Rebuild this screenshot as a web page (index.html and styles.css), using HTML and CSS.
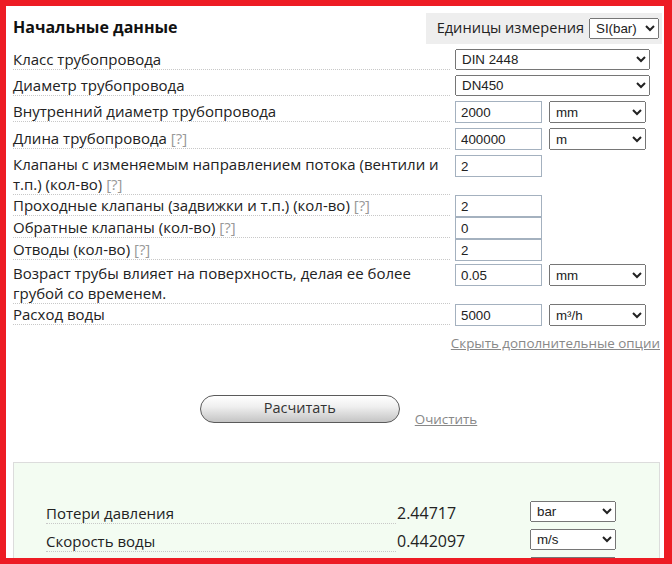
FILE: index.html
```html
<!DOCTYPE html>
<html lang="ru">
<head>
<meta charset="utf-8">
<title>Потери давления в трубопроводе</title>
<link rel="stylesheet" href="styles.css">
</head>
<body>
<div class="frame">
  <div class="calc">
    <div class="head">
      <h2 class="title">Начальные данные</h2>
      <div class="units">
        <span>Единицы измерения</span>
        <select class="sel sel--units"><option>SI(bar)</option></select>
      </div>
    </div>

    <div class="row">
      <div class="label">Класс трубопровода</div>
      <div class="ctrl"><select class="sel sel--wide"><option>DIN 2448</option></select></div>
    </div>
    <div class="row">
      <div class="label">Диаметр трубопровода</div>
      <div class="ctrl"><select class="sel sel--wide"><option>DN450</option></select></div>
    </div>
    <div class="row">
      <div class="label">Внутренний диаметр трубопровода</div>
      <div class="ctrl"><input class="inp" value="2000"><select class="sel sel--unit"><option>mm</option></select></div>
    </div>
    <div class="row">
      <div class="label">Длина трубопровода <span class="hint">[?]</span></div>
      <div class="ctrl"><input class="inp" value="400000"><select class="sel sel--unit"><option>m</option></select></div>
    </div>
    <div class="row row--flush">
      <div class="label label--multi">Клапаны с изменяемым направлением потока (вентили и т.п.) (кол-во) <span class="hint">[?]</span></div>
      <div class="ctrl"><input class="inp" value="2"></div>
    </div>
    <div class="row row--flush">
      <div class="label">Проходные клапаны (задвижки и т.п.) (кол-во) <span class="hint">[?]</span></div>
      <div class="ctrl"><input class="inp" value="2"></div>
    </div>
    <div class="row row--flush">
      <div class="label">Обратные клапаны (кол-во) <span class="hint">[?]</span></div>
      <div class="ctrl"><input class="inp" value="0"></div>
    </div>
    <div class="row row--snug">
      <div class="label">Отводы (кол-во) <span class="hint">[?]</span></div>
      <div class="ctrl"><input class="inp" value="2"></div>
    </div>
    <div class="row row--flush">
      <div class="label label--multi">Возраст трубы влияет на поверхность, делая ее более грубой со временем.</div>
      <div class="ctrl"><input class="inp" value="0.05"><select class="sel sel--unit"><option>mm</option></select></div>
    </div>
    <div class="row">
      <div class="label">Расход воды</div>
      <div class="ctrl"><input class="inp" value="5000"><select class="sel sel--unit"><option>m³/h</option></select></div>
    </div>

    <div class="more"><a href="#">Скрыть дополнительные опции</a></div>

    <div class="actions">
      <button class="calc-btn" type="button">Расчитать</button>
      <a class="clear" href="#">Очистить</a>
    </div>

    <div class="results">
      <div class="res-row">
        <div class="res-label">Потери давления</div>
        <div class="res-value">2.44717</div>
        <select class="sel sel--res"><option>bar</option></select>
      </div>
      <div class="res-row">
        <div class="res-label">Скорость воды</div>
        <div class="res-value">0.442097</div>
        <select class="sel sel--res"><option>m/s</option></select>
      </div>
      <div class="res-row">
        <div class="res-label"></div>
        <div class="res-value"></div>
        <select class="sel sel--res"><option></option></select>
      </div>
    </div>
  </div>
</div>
</body>
</html>
```

FILE: styles.css
```css
* { box-sizing: border-box; }

html, body {
  margin: 0;
  padding: 0;
  background: #ffffff;
}

.frame {
  height: 564px;
  overflow: hidden;
  border: 6px solid #ed1c24;
  border-right-width: 8px;
  background: #ffffff;
}

.calc {
  padding: 6px 4px 0 7px;
  font-family: "Open Sans", "Liberation Sans", sans-serif;
  font-size: 15px;
  color: #222;
}

.head {
  display: flex;
  justify-content: space-between;
  align-items: flex-start;
  height: 32px;
  margin-bottom: 5px;
}

.title {
  margin: 0;
  padding-top: 4px;
  line-height: 22px;
  font-size: 16px;
  font-weight: 700;
  color: #111;
}

.units {
  display: flex;
  align-items: baseline;
  gap: 5px;
  height: 31px;
  margin-top: 1px;
  margin-right: -2px;
  padding: 4px 3px 6px 11px;
  background: #eeeeee;
  font-size: 14.6px;
  color: #222;
}

.sel {
  height: 21px;
  font-family: "Liberation Sans", Arial, sans-serif;
  font-size: 13.33px;
  color: #222;
  padding: 0 2px;
}

.sel--units { width: 70px; }
.sel--wide { width: 195px; }
.sel--unit { width: 97px; height: 22px; }
.sel--res { width: 86px; }

.inp {
  width: 87px;
  height: 22px;
  padding: 0 5px;
  border: 1px solid #a4b1bf;
  font-family: "Liberation Sans", Arial, sans-serif;
  font-size: 13.33px;
  color: #222;
  background: #fff;
}

.row {
  display: flex;
  align-items: flex-start;
  margin-bottom: 5px;
}

.row--flush { margin-bottom: 0; }
.row--snug { margin-bottom: 3px; }

.label {
  width: 437px;
  flex: none;
  padding-top: 1px;
  line-height: 19px;
  border-bottom: 1px dotted #c8c8c8;
}

.label--multi { line-height: 19.5px; padding-top: 0; }

.hint {
  display: inline-block;
  line-height: 19px;
  color: #999;
}

.ctrl {
  display: flex;
  gap: 7px;
  margin-left: 5px;
}

.more {
  margin-top: 8px;
  text-align: right;
  line-height: 19px;
  font-size: 13.4px;
}

.more a,
.clear {
  color: #888;
  text-decoration: underline;
}

.actions {
  display: flex;
  justify-content: center;
  align-items: flex-start;
  gap: 15px;
  margin-top: 42px;
  padding-left: 4px;
}

.calc-btn {
  width: 200px;
  height: 28px;
  border: 1px solid #5a5a5a;
  border-radius: 14px;
  background: linear-gradient(#ffffff 0%, #f0f0f0 40%, #c4c4c4 100%);
  font-family: "Open Sans", "Liberation Sans", sans-serif;
  font-size: 14.5px;
  color: #333;
  padding: 0 0 3px;
}

.clear {
  margin-top: 15px;
  line-height: 19px;
  font-size: 13.4px;
}

.results {
  margin-top: 33px;
  padding: 38px 0 10px 32px;
  background: #f3fcf2;
  border: 1px solid #dcdcdc;
  min-height: 200px;
}

.res-row {
  display: flex;
  align-items: flex-start;
  margin-bottom: 5px;
}

.res-label {
  width: 350px;
  min-height: 23px;
  flex: none;
  padding-top: 3px;
  line-height: 19px;
  border-bottom: 1px dotted #c8c8c8;
}

.res-value {
  width: 134px;
  flex: none;
  padding-top: 3px;
  padding-left: 1px;
  line-height: 19px;
  font-size: 16px;
  color: #222;
}
```
